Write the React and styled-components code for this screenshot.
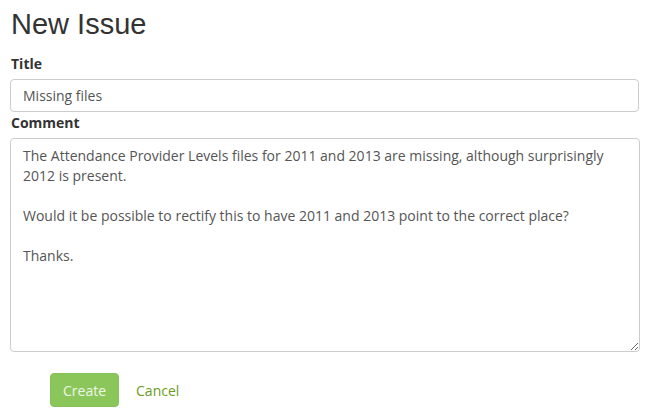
import React from 'react'
import styled, { createGlobalStyle } from 'styled-components'

const Global = createGlobalStyle`
  html, body {
    margin: 0;
    background: #fff;
  }
  body {
    font-family: 'Open Sans', 'Liberation Sans', sans-serif;
    font-size: 14px;
    color: #333;
  }
`

const Page = styled.main`
  padding: 5px 6px 0 10px;
`

const H1 = styled.h1`
  margin: -1px 0 10px 1px;
  font-family: 'Liberation Sans', Arial, sans-serif;
  font-weight: 400;
  font-size: 29px;
  line-height: 40px;
  color: #333;
`

const Label = styled.label`
  display: block;
  margin: 0 0 5px 1px;
  font-weight: 700;
  font-size: 14px;
  line-height: 20px;
  color: #333;
`

const Input = styled.input`
  display: block;
  box-sizing: border-box;
  width: 629px;
  height: 33px;
  margin: 0 0 1px;
  padding: 6px 12px;
  border: 1px solid #ccc;
  border-radius: 4px;
  font-family: 'Open Sans', sans-serif;
  font-size: 14px;
  color: #555;
  outline: none;
`

const TextArea = styled.textarea`
  display: block;
  box-sizing: border-box;
  width: 630px;
  height: 214px;
  margin: 0;
  padding: 7px 12px;
  border: 1px solid #ccc;
  border-radius: 4px;
  font-family: 'Open Sans', sans-serif;
  font-size: 14px;
  line-height: 20px;
  color: #555;
  resize: both;
  outline: none;
`

const Actions = styled.div`
  display: flex;
  align-items: center;
  gap: 17px;
  margin: 21px 0 0 40px;
`

const Button = styled.button`
  height: 34px;
  padding: 0 12px;
  border: 1px solid #86c157;
  border-radius: 4px;
  background: #8bc65b;
  color: #eef7e6;
  font-family: 'Open Sans', sans-serif;
  font-size: 14px;
  cursor: pointer;
`

const LinkText = styled.a`
  color: #6b9c1e;
  font-size: 14px;
  text-decoration: none;
`

const comment = `The Attendance Provider Levels files for 2011 and 2013 are missing, although surprisingly 2012 is present.

Would it be possible to rectify this to have 2011 and 2013 point to the correct place?

Thanks.`

export default function App() {
  return (
    <Page>
      <Global />
      <H1>New Issue</H1>
      <Label htmlFor='title'>Title</Label>
      <Input id='title' defaultValue='Missing files' />
      <Label htmlFor='comment'>Comment</Label>
      <TextArea id='comment' defaultValue={comment} />
      <Actions>
        <Button type='button'>Create</Button>
        <LinkText href='#'>Cancel</LinkText>
      </Actions>
    </Page>
  )
}
